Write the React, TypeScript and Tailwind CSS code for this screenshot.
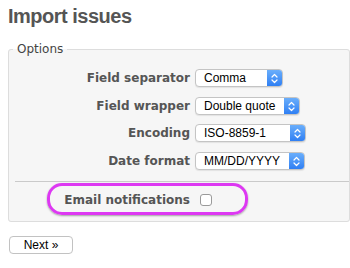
import React from 'react';

const rows = [
    { label: 'Field separator', value: 'Comma', width: 'w-[88px]' },
    { label: 'Field wrapper', value: 'Double quote', width: 'w-[105px]' },
    { label: 'Encoding', value: 'ISO-8859-1', width: 'w-[111px]' },
    { label: 'Date format', value: 'MM/DD/YYYY', width: 'w-[110px]' },
];

const rowGaps = ['', 'mt-[10px]', 'mt-[9px]', 'mt-[10px]'];

const SelectBox: React.FC<{ value: string; width: string }> = ({ value, width }) => (
    <div
        className={`${width} h-[18px] flex items-stretch bg-white border border-[#c4c4c4] rounded-[4px] shadow-[0_1px_1px_rgba(0,0,0,0.08)] overflow-hidden`}
    >
        <span className="flex-1 pl-[8px] text-[12px] leading-[16px] text-black font-['Liberation_Sans',Arial,sans-serif] whitespace-nowrap">
            {value}
        </span>
        <span className="w-[15px] flex items-center justify-center bg-gradient-to-b from-[#6aaefb] to-[#2f7ff3]">
            <svg width="7" height="11" viewBox="0 0 7 11" fill="none">
                <path d="M1 4 L3.5 1.5 L6 4" stroke="white" strokeWidth="1.2" strokeLinecap="round" strokeLinejoin="round" />
                <path d="M1 7 L3.5 9.5 L6 7" stroke="white" strokeWidth="1.2" strokeLinecap="round" strokeLinejoin="round" />
            </svg>
        </span>
    </div>
);

const App: React.FC = () => {
    return (
        <div className="relative w-[350px] h-[268px] bg-white overflow-hidden font-['DejaVu_Sans',Verdana,sans-serif]">
            <h2 className="pl-[8px] pt-[4px] text-[20px] leading-[24px] font-bold tracking-[-0.5px] text-[#555] font-['Liberation_Sans',Arial,sans-serif]">
                Import issues
            </h2>

            <fieldset className="mt-[14px] ml-[8px] w-[342px] pl-[4px] pb-[12px] bg-[#f6f6f6] border border-[#dddddd] rounded-[3px]">
                <legend className="px-[4px] text-[12px] leading-[14px] text-[#444]">Options</legend>

                <div className="pt-[13px] flex flex-col">
                    {rows.map((r, i) => (
                        <div key={r.label} className={`flex items-center h-[18px] ${rowGaps[i]}`}>
                            <span className="w-[177px] text-right text-[12px] font-bold text-[#555] whitespace-nowrap">
                                {r.label}
                            </span>
                            <div className="ml-[5px]">
                                <SelectBox value={r.value} width={r.width} />
                            </div>
                        </div>
                    ))}
                </div>

                <div className="mt-[11px] ml-[2px] h-px bg-[#cacaca]"></div>

                <div className="mt-[9px] flex items-center h-[18px]">
                    <span className="w-[177px] text-right text-[12px] font-bold text-[#555] whitespace-nowrap">
                        Email notifications
                    </span>
                    <span className="ml-[10px] w-[12px] h-[12px] bg-white border border-[#9a9a9a] rounded-[3px]"></span>
                </div>
            </fieldset>

            <button className="mt-[14px] ml-[9px] w-[64px] h-[18px] bg-white border border-[#c2c2c2] rounded-[4px] text-[12px] leading-[16px] text-black font-['Liberation_Sans',Arial,sans-serif]">
                Next »
            </button>

            {/* highlight annotation */}
            <div className="absolute left-[47px] top-[183px] w-[201px] h-[32px] border-[3px] border-[#dd38f2] rounded-[15px] shadow-[0_1px_2px_rgba(0,0,0,0.35)]"></div>
        </div>
    );
};

export default App;
